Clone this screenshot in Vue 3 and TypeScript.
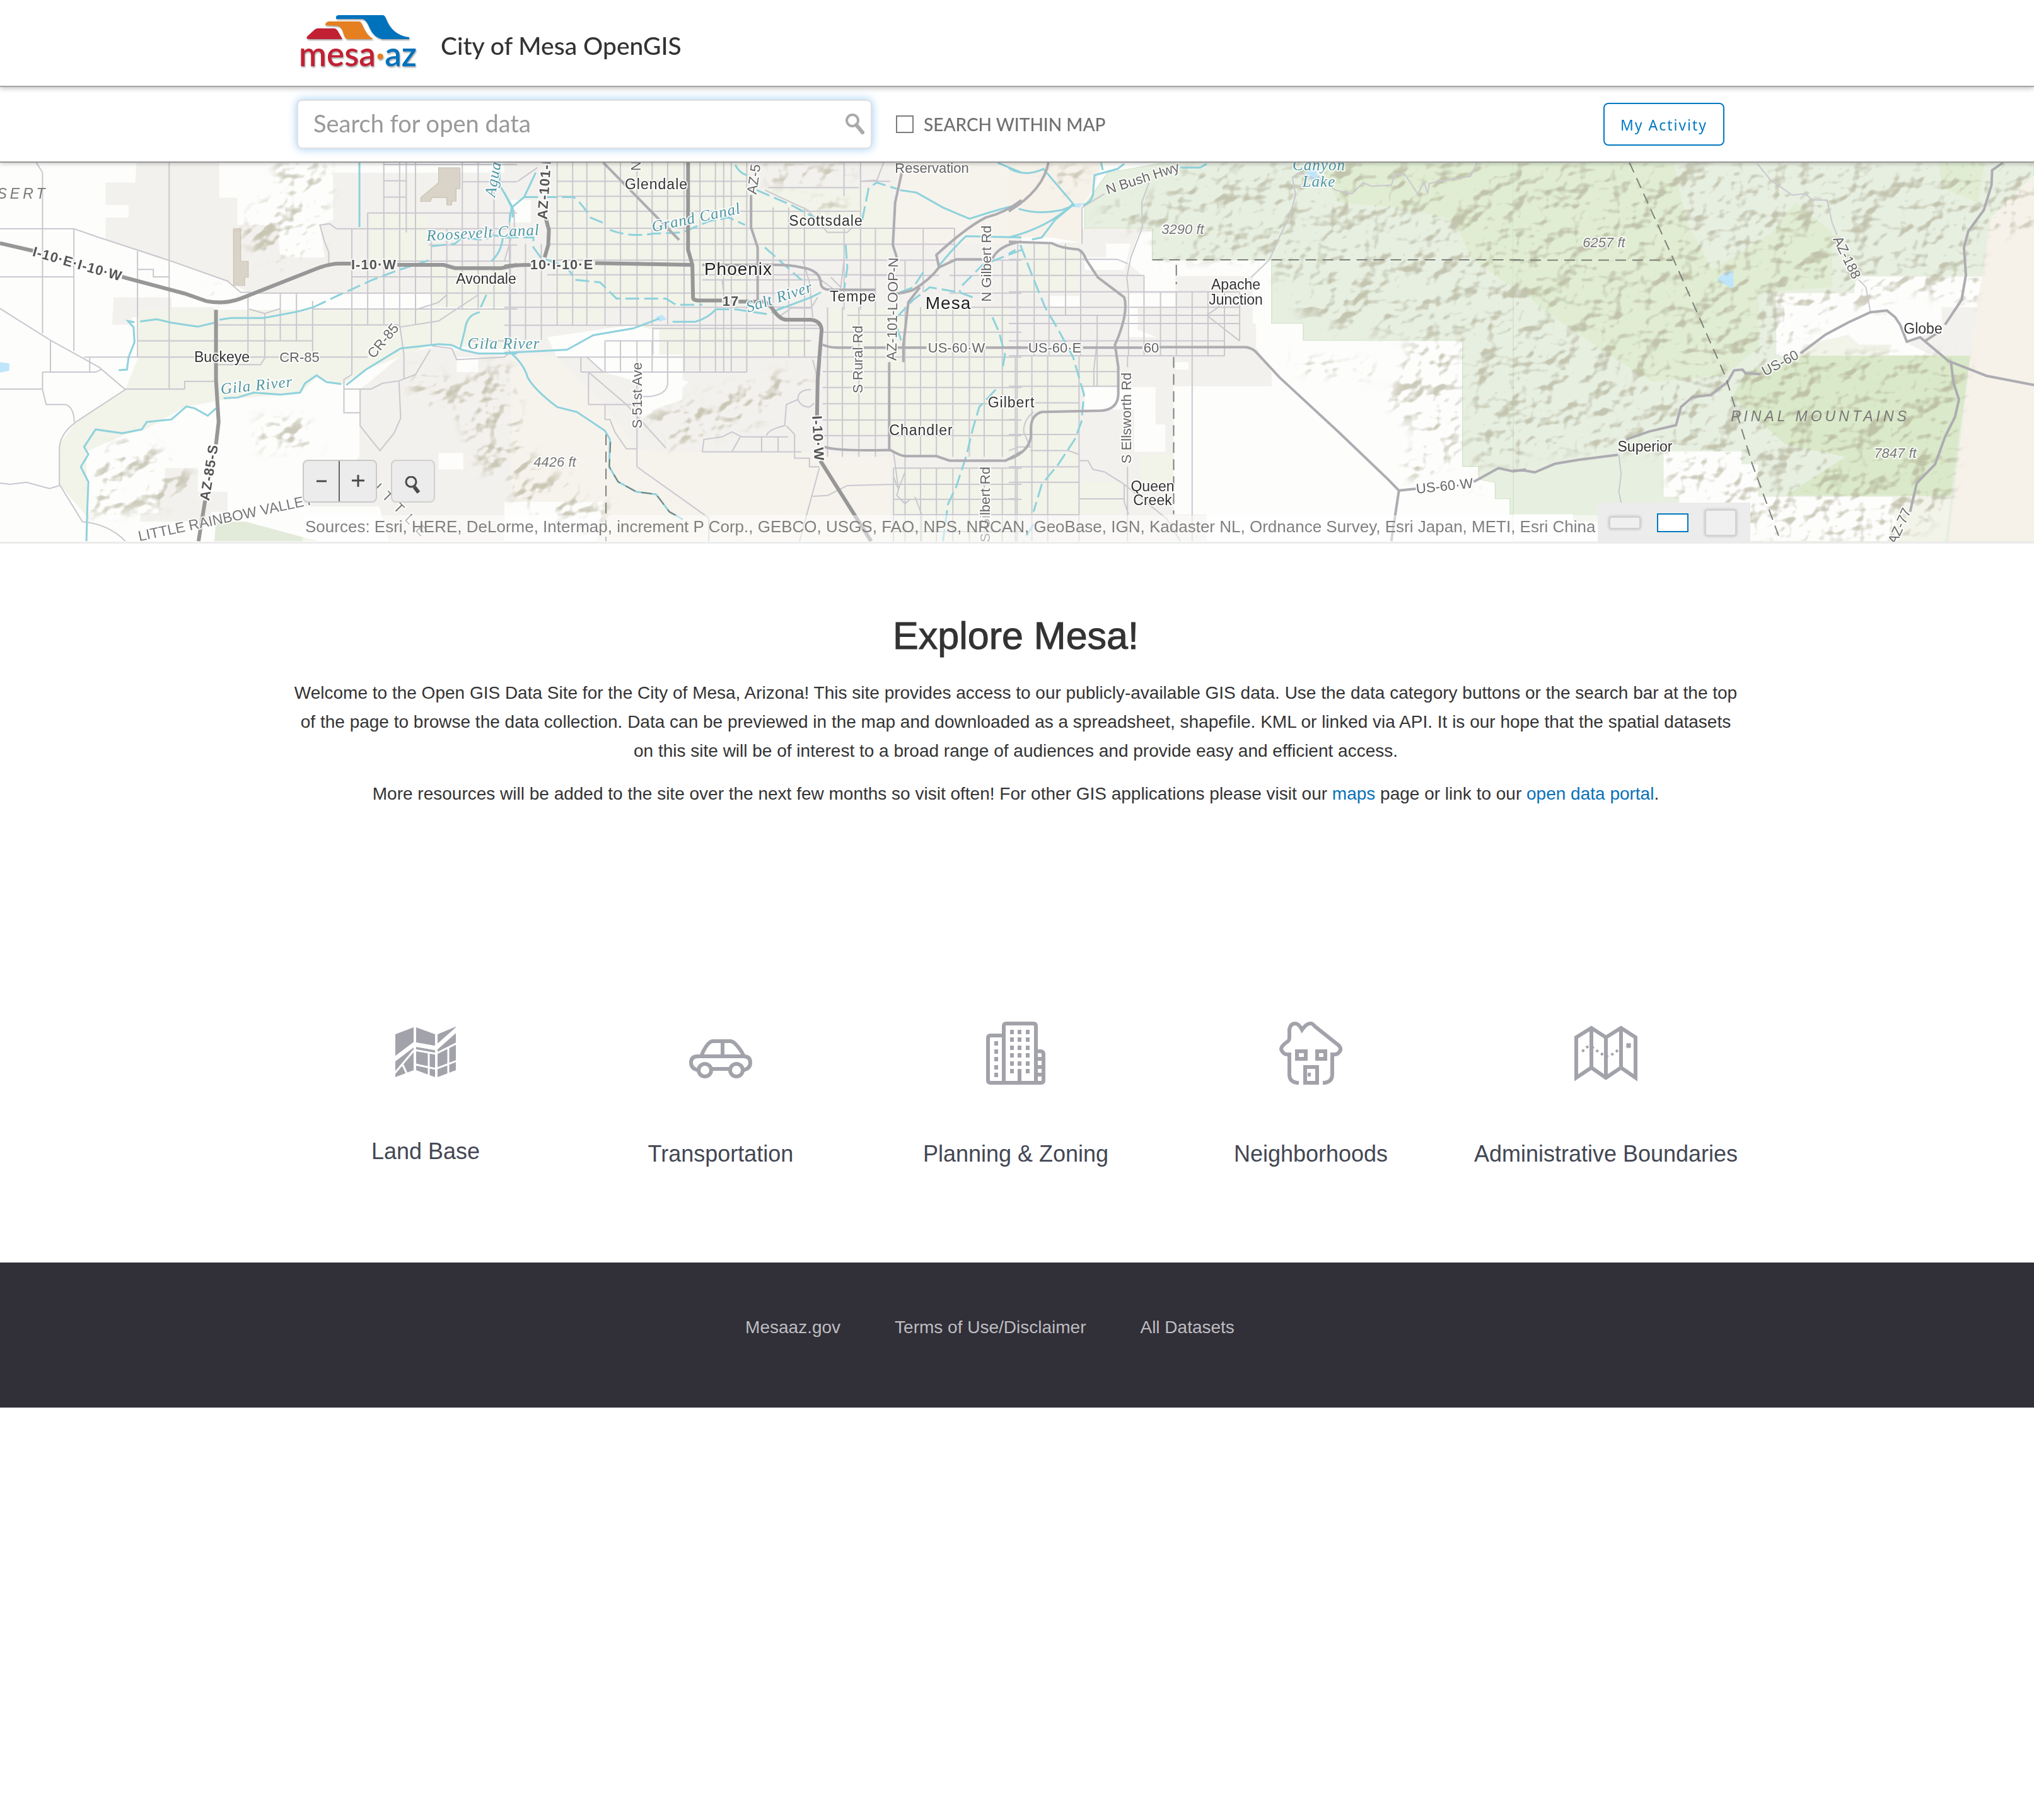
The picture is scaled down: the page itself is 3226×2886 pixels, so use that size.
<script setup lang="ts">
import { ref } from 'vue'

type Line = [at: number, from: number, to: number]

interface Area {
  kind: string
  d: string
}

interface Tile {
  x: number
  scaleX: number
  areas: Area[]
  hills: string
  columns: Line[]
  rows: Line[]
  minor: string
  middle: string
  major: string
  water: string
  canal: string
  border: string
}

interface Label {
  text: string
  x: number
  y: number
  kind: string
  turn?: number
}

const query = ref('')
const withinMap = ref(false)
const mapSize = ref('medium')
const sizes = ['small', 'medium', 'large']

const span = (at: number[], from: number, to: number): Line[] => at.map((n): Line => [n, from, to])

const gridPath = (tile: Tile): string =>
  tile.columns.map(([x, a, b]) => `M${x} ${a}V${b}`).join('') +
  tile.rows.map(([y, a, b]) => `M${a} ${y}H${b}`).join('')

const tiles: Tile[] = [
  {
    x: 0,
    scaleX: 0.523,
    areas: [
      { kind: 'urban', d: 'M415 0H665V160H720V270H840L850 400H985L970 270 1010 250V60H1568V545H760L700 500 520 420 420 375 320 330V240H390V190H320V100H410Z' },
      { kind: 'urban', d: 'M345 560H520V600H650V640H400V670H340Z' },
      { kind: 'farm', d: 'M420 610H1568V770L1310 750 1110 850 1040 910 960 880 910 945 680 970 560 1000 440 1090 380 1110 260 1180 270 1450 180 1310V1150L230 1060 380 930 420 800Z' },
      { kind: 'urban', d: 'M1120 900 1220 790 1310 760 1568 800V1538H1180L1150 1400H920V1380L1090 1200V930Z' },
      { kind: 'urban', d: 'M500 1245H600V1340H690V1420H640V1460H425V1425H480V1330H500Z' },
      { kind: 'bare', d: 'M1330 1185H1405V1250H1330ZM1385 800H1450V860H1385ZM850 550H900V600H850ZM665 60H720V160H665Z' },
      { kind: 'farm', d: 'M1120 225H1300V420H1120ZM1310 430H1568V600H1310Z' },
      { kind: 'park', d: 'M655 1460H745L965 1538H650Z' },
      { kind: 'field', d: 'M708 285H730V415H753V480H742V513H708ZM1330 40H1395V125H1383V175H1370V190H1355V160H1310L1305 176H1276V160L1330 100Z' },
      { kind: 'lake', d: 'M0 820 28 825V855L0 862Z' },
    ],
    hills: 'M820 20H1000V170L960 260 980 340 850 440 780 400 730 300 760 200 850 150 840 60ZM620 530H710V570H640ZM300 1180 420 1110 600 1300 500 1400 270 1450ZM780 1040H920L970 1170H780ZM1250 840 1400 900 1500 820 1568 860V1300L1450 1250 1400 1050 1250 960Z',
    columns: [
      [129, 60, 705], [224, 285, 775], [417, 375, 800], [513, 20, 925], [752, 545, 800], [803, 625, 800],
      ...span([850, 899], 545, 735), [948, 575, 800], [1067, 285, 870], [1115, 220, 670], [1164, 20, 670],
      [1212, 20, 680], [1232, 20, 300], [1260, 20, 670], [1308, 285, 750], [1355, 285, 600], ...span([1402, 1450, 1498], 20, 610),
      [1545, 220, 790], [153, 735, 860], [272, 800, 860],
    ],
    rows: [
      ...span([285, 478], 0, 224), [543, 760, 1568], [607, 950, 1568], [671, 660, 1210], [735, 417, 948], [800, 255, 1115],
      [928, 0, 129], [928, 380, 560], [222, 1115, 1568], [285, 1020, 1568], [478, 1067, 1568], ...span([93, 158], 1164, 1232),
      [28, 1164, 1568], [97, 1402, 1568], [350, 1300, 1568], [415, 1205, 1545], [735, 1420, 1568],
    ],
    minor: 'M110 20 129 60M224 285 300 320 520 415 690 495 730 540H760M0 605 150 730 300 840 380 930 230 1060Q180 1110 180 1170V1310L250 1460Q330 1470 380 1538M129 860H290L310 848M129 860V930L140 990H200Q225 1005 225 1060M0 1305 30 1310 80 1302 150 1327 180 1315M560 928V897H650M417 448H465V478H513M1067 870 1043 890V1023H1092M1043 928H1125L1160 905 1210 895 1260 870 1305 770M1092 928V1075L1152 1175 1195 1105 1215 1045 1210 895M1212 670 1225 790V885M1210 680 1330 655 1450 550M1000 265 970 270 985 340 997 380V430M1000 265 1020 285M755 607 803 625 850 605M660 830H790L805 800M1310 755 1370 765 1385 810 1530 800 1545 780M1260 610 1330 580 1355 550',
    middle: '',
    major: 'M0 343 105 375M370 478 560 545 625 575Q680 590 730 565L960 445Q1000 425 1030 425H1065M1205 430H1345L1380 443H1520L1568 430M655 610V890L663 1060 655 1150M622 1375 602 1538',
    water: 'M360 852 385 850 390 800 408 740 405 680 388 655 408 660M425 657 475 648 520 662 600 678 650 662M665 650 700 643 800 643 900 618 950 600M262 1538 265 1400 268 1300 245 1240 268 1190 255 1160 290 1090 370 1105 430 1090 445 1060 520 1050 565 998 590 1005 630 1035 655 1005M678 965 720 962 770 942 850 950 910 942 925 905 960 873 990 900 1035 908M1050 912 1110 850 1215 765 1330 748 1370 752 1400 770 1450 785 1568 785M1090 20V278M1515 20V110L1555 200V240M1525 320Q1520 380 1490 415M1455 620Q1415 630 1410 690L1395 770M1475 550 1458 600',
    canal: 'M950 600 1030 550 1130 490 1210 450 1300 412M1310 355 1380 345 1400 322 1470 330 1490 312 1568 320',
    border: '',
  },
  {
    x: 800,
    scaleX: 0.523,
    areas: [
      { kind: 'urban', d: 'M0 0H1568V1538H0Z' },
      { kind: 'desert', d: 'M20 790 160 800 300 990 400 1170 480 1180H900L1170 1200V1538H330L20 1370ZM1190 0H1568V345H1190Z' },
      { kind: 'farm', d: 'M150 20H740V600H300V660H150ZM750 120H1170V400H750ZM980 600H1568V1200H1180V1110H980ZM1180 1240H1568V1538H1180ZM300 680H930V795H300Z' },
      { kind: 'bare', d: 'M130 720 390 670 450 690H470V790H540V970L430 1020 410 900 300 860 250 800H160ZM20 170H80V260H20ZM400 950 520 880 560 900 420 1050Z' },
      { kind: 'bare', d: 'M0 1380H300L280 1538H0Z' },
      { kind: 'lake', d: 'M458 640 478 630 492 648 470 658Z' },
    ],
    hills: 'M420 1040 700 920 940 820 930 900 740 1080 640 1110 490 1170 480 1100ZM0 850 30 900 60 1100 100 1250 200 1290 250 1370 330 1400 290 1538 60 1400 20 1370ZM780 20H1060V80L960 100 800 110ZM930 170H1030V225H930Z',
    columns: [
      ...span([160, 207, 250, 305, 352, 402, 448, 495], 20, 670), ...span([545, 593, 640, 665, 688, 735], 20, 860), ...span([815, 862, 910], 200, 800),
      ...span([305, 352, 402, 448, 495], 735, 860), [1080, 20, 610], ...span([1030, 1125], 280, 610), ...span([980, 1025, 1075, 1125, 1215, 1262, 1310, 1360, 1410, 1455, 1510, 1555], 600, 1200),
      ...span([1180, 1215, 1262, 1310, 1360, 1410, 1455, 1510, 1555], 1245, 1538), ...span([1270, 1365], 283, 540), [1215, 411, 545], [1510, 411, 600], [1555, 411, 600],
      ...span([18, 64, 112], 345, 730), [402, 800, 1240], [232, 800, 860], [255, 860, 990], [305, 990, 1050], ...span([780, 830, 880], 1120, 1180), [1030, 20, 155],
    ],
    rows: [
      ...span([95, 155], 160, 740), ...span([215], 160, 1080), ...span([283, 347, 411, 470], 130, 1170), ...span([543, 600], 0, 930), [672, 0, 960], [735, 305, 930], [800, 160, 950], [860, 232, 735], [990, 255, 400],
      ...span([411, 472], 1080, 1318), ...span([411, 472, 543, 600], 1350, 1568), [283, 1170, 1365], [347, 1170, 1365], [632, 1040, 1568],
      ...span([700, 800, 858, 922, 987, 1052, 1115], 965, 1568), ...span([1245, 1310, 1370, 1432, 1500], 1180, 1568), [1180, 600, 900], [120, 800, 1075], [95, 1080, 1170],
    ],
    minor: 'M305 1050H320L335 1100 370 1168H402M402 1240 620 1445V1538M450 680V790M450 685H960M495 860V910Q490 950 440 958H400M255 860 370 990 490 1165M600 1180 605 1130 660 1120 690 1100 720 1120H860M690 1180 715 1120M795 1115Q800 1090 850 1075L855 990 890 970Q890 930 930 930M890 970Q900 1000 925 1000L940 985M855 1075 880 1110V1205H925V1240H955M955 1245 895 1538M935 1358 980 1355 1040 1315 1180 1310M1180 1180 1195 1330 1180 1280M1215 1197 1215 1260 1195 1330 1190 1355 1215 1388 1230 1370M1245 1360 1265 1430V1538M790 130 920 210 980 300 1040 300 1075 250M1080 95 1130 90 1150 20M830 640 870 603H930L950 560M0 415 30 280V210M40 95 100 40M300 860 250 800M905 410 925 500 935 640M660 490 665 540M600 490H960L1000 530M990 480 1020 520 1030 410M950 890 935 810',
    middle: 'M1568 170Q1520 220 1460 240 1400 280 1310 390L1318 440Q1290 490 1240 530 1210 545 1180 545M1318 440 1370 408H1448M1480 405Q1500 350 1568 337M1205 60 1185 180 1178 350 1190 400M1167 820V1170M970 1160Q1010 1178 1170 1172 1200 1195 1215 1197H1310L1350 1215H1520L1568 1180M600 430H820Q870 430 900 440 960 450 960 510 965 530 990 530H1125M748 150V280L768 360V570M300 20 530 330M965 750Q985 762 1010 762H1060M1090 762H1160M1190 762H1280M1460 762H1568M1210 820V750L1225 580 1260 520',
    major: 'M0 437Q30 430 80 430M275 423 570 430M557 20V370L570 430 572 560Q572 573 590 573H660M710 577H790Q805 590 815 610 835 650 855 650H930Q960 655 962 690L950 890 948 1040M958 1215 1112 1538M125 240 135 290 133 350 122 400',
    water: 'M0 783 190 770 270 712 390 685 470 645M510 658H580Q620 640 640 610M20 783Q60 830 70 880 90 930 160 1000L220 1020 305 1095 320 1130 318 1240 345 1300 400 1340 460 1350 500 1420 540 1450M0 140 22 200 60 158 95 60M22 200 15 260M1200 130 1250 140 1330 200 1410 245 1470 220 1510 205 1568 185M1568 320 1400 315Q1370 350 1320 430M700 30Q715 65 735 70M830 610 930 560 960 540M1495 20 1568 60',
    canal: 'M60 158H210Q240 190 260 240L300 262M320 290Q380 320 450 305L540 300 620 255 680 240 730 270M0 320H88V360L110 400 190 440 215 490 290 500 340 565H490L520 590H600M640 608 700 608 800 628 860 590M765 130 870 190 940 240M1085 250 1105 120 1130 100 1190 125M790 360 900 490M1035 350 1040 440 1030 530M1270 460 1240 520 1200 540M1568 370 1450 430 1390 510 1380 540M1480 640 1500 700 1518 790 1510 850M1490 930 1440 1000 1420 1090 1400 1200 1370 1320 1345 1390 1330 1538M1190 640 1240 570 1290 520 1380 540 1420 560M1190 680 1210 760',
    border: 'M308 1110V1538M322 1140 318 1240 345 1300 400 1340 460 1350 500 1420 540 1450',
  },
  {
    x: 1600,
    scaleX: 0.523,
    areas: [
      { kind: 'reserve', d: 'M0 0H290L255 130 220 200V340L130 320H0Z' },
      { kind: 'urban', d: 'M0 340H220V283H400L360 420 410 480V538H505V475H740V665H750V760L797 860V917H500V1430H600V1538H0Z' },
      { kind: 'bare', d: 'M295 345H370L350 450H230V400H295ZM125 555H215V600H125ZM360 545H505V600H390V690L450 720H360ZM230 920H445V1070H475V1180H380V1010H230ZM505 820H545V850H505Z' },
      { kind: 'farm', d: 'M20 350H210V540H20ZM0 800H215V1430H0ZM220 800H325V917H220ZM220 1300H340V1430H220ZM400 1190H500V1300H400Z' },
      { kind: 'forest', d: 'M230 190 300 60 560 0H1568V1430H1520V1368H1475V1303L1425 1290V1238H1376V733H893V665H797V410H435V283H230Z' },
      { kind: 'bright', d: 'M950 0H1568V560L1400 400 1350 250 1180 200 1000 180 960 80Z' },
      { kind: 'lake', d: 'M900 40H930L935 70 955 90 920 95 905 75ZM190 185 225 182 215 200 195 198Z' },
    ],
    hills: 'M300 180 460 140 560 20H1568V1230H1400V740L1000 690 900 640 850 560 810 480V410H440V283H270ZM1210 740H1370V1200L1260 1290 1190 1280 1240 1100 1150 1000ZM830 800 960 810 1120 830 1100 880 900 860ZM1390 1350 1430 1330 1425 1370ZM100 60 240 20 220 120 130 140Z',
    columns: [
      ...span([27, 77, 122, 172], 345, 632), ...span([27, 77, 122], 600, 795), [218, 370, 795], [268, 632, 917], ...span([363, 410], 540, 795), ...span([460, 508, 556, 604, 654], 540, 795), [700, 540, 735],
      ...span([20, 70, 118, 213], 795, 1538), [556, 795, 1538], [360, 795, 840], [360, 1240, 1538], [410, 472, 538], [222, 200, 345],
    ],
    rows: [
      [408, 0, 330], [472, 0, 410], [538, 0, 700], ...span([600, 632, 665], 0, 700), [735, 0, 655], [795, 0, 655], ...span([858, 917], 0, 330), [983, 80, 213], [1050, 0, 20], [1110, 0, 210],
      ...span([1240, 1302], 0, 213), [1368, 0, 20], [1368, 213, 350], [1432, 0, 213],
    ],
    minor: 'M222 200 290 145M425 100 403 180 405 280 370 400 358 480 363 540M880 60 860 80 870 150 850 240 820 320 790 410 735 480M880 60 960 100 990 130 1040 145 1075 100 1100 115 1160 110 1170 70 1200 65 1215 95 1240 145 1260 100 1270 145 1275 105 1300 95 1400 75 1420 20M600 632 700 735M600 632 635 600 650 560M330 408 360 425M213 1215H240L255 1250 290 1260 350 1310 480 1450 520 1538M65 1175H180L213 1190M75 1020Q45 1050 45 1100L65 1160 30 1160 0 1175M350 1310V1380L363 1430M268 735 258 850V917',
    middle: 'M120 20Q105 130 0 215M0 337 130 343Q160 365 210 368 225 375 235 410L270 480 350 560Q357 590 350 640 340 700 322 750L332 840V950Q330 1010 280 1015L100 1020Q70 1030 67 1080V1120Q60 1180 0 1210M0 762H60M225 762H405M455 760H720Q740 765 750 780L820 880 1000 1100 1150 1290 1183 1335 1235 1328M1410 1300 1485 1245 1530 1258 1568 1250M1183 1335 1160 1538',
    major: '',
    water: 'M0 42Q50 80 105 45L195 185Q120 280 0 320M30 205Q90 230 160 210L200 190M70 328 100 320 140 250 190 195M225 190Q250 180 255 150L260 70 330 45 350 25M280 20 285 50M520 40H580L600 25',
    canal: 'M35 350 70 470 110 600 150 690 195 800 228 950 220 1060 200 1130 150 1230 100 1310 75 1420M75 1470 45 1538M0 385 20 370',
    border: 'M435 410H1568M508 430V508M500 800V1430',
  },
  {
    x: 2400,
    scaleX: 0.5268,
    areas: [
      { kind: 'forest', d: 'M0 0H1568V1538H0Z' },
      { kind: 'bright', d: 'M0 0H480L520 250 600 450 780 300 850 180 960 300V520L740 540V760L640 870 420 900 300 800 100 620 0 500ZM1280 20H1420L1400 180 1290 120Z' },
      { kind: 'pinal', d: 'M700 860 870 793H1377L1318 1355H820L1000 1200 820 1150 660 960Z' },
      { kind: 'bare', d: 'M792 543H1027V500L1050 477H1412L1397 600 1377 793H792Z' },
      { kind: 'urban', d: 'M1290 600H1397L1377 793H1260L1180 740 1290 690Z' },
      { kind: 'farm', d: 'M850 793 880 750 1010 710 1040 750H1140L1130 793Z' },
      { kind: 'bare', d: 'M453 1178H687V1230H737V1360H1318L1300 1538H0V1430H180V1460H500V1360H453Z' },
      { kind: 'reserve', d: 'M1568 70 1440 240 1410 480 1377 793 1310 1538H1568Z' },
      { kind: 'farm', d: 'M1140 1360H1318L1300 1538H1160Z' },
      { kind: 'lake', d: 'M615 485 640 457 663 455V525L640 510 618 498Z' },
    ],
    hills: 'M0 20H1568V300H1420L1400 600 1150 520 1120 620 1040 600 900 680 800 780 1370 800 1318 1400 1180 1538H600L500 1400 440 1180H0ZM460 1180H690V1360H640L520 1400Z',
    columns: [],
    rows: [],
    minor: 'M735 25 775 90 840 150 880 145 900 170 945 170 960 260 975 310M1040 490 1062 520 1075 615M318 1190 325 1270 318 1340 325 1385',
    middle: 'M0 1255 30 1254 65 1262 125 1228 195 1212 315 1192M340 1130 410 1098 490 1073 505 1000 540 960 595 952 645 900 665 853 690 850 700 865 745 868M865 785 940 710 1010 660 1075 620 1125 613 1150 640 1165 670 1185 738 1225 720 1310 815 1425 875 1568 912M1240 735 1275 705M1300 670 1350 570 1363 470 1357 360 1370 295 1417 210 1440 110 1442 50 1475 20M1318 820 1325 900 1342 970 1330 1040 1300 1120 1270 1230 1215 1305 1195 1420',
    major: '',
    water: '',
    canal: '',
    border: 'M0 411H480M350 20 480 400 560 640 640 880 720 1230 805 1538',
  },
]

const labels: Label[] = [
  { text: 'SERT', x: 36, y: 307, kind: 'range' },
  { text: 'I-10·E·I-10·W', x: 123, y: 418, kind: 'freeway', turn: 16 },
  { text: 'I-10·W', x: 593, y: 419, kind: 'freeway' },
  { text: '10·I-10·E', x: 891, y: 419, kind: 'freeway' },
  { text: '17', x: 1159, y: 477, kind: 'freeway' },
  { text: 'AZ-85-S', x: 331, y: 749, kind: 'freeway', turn: -81 },
  { text: 'AZ-101-L', x: 863, y: 297, kind: 'freeway', turn: -86 },
  { text: 'I-10·W', x: 1298, y: 695, kind: 'freeway', turn: 87 },
  { text: 'Roosevelt Canal', x: 766, y: 369, kind: 'stream', turn: -3 },
  { text: 'Agua', x: 782, y: 284, kind: 'stream', turn: -80 },
  { text: 'Grand Canal', x: 1104, y: 345, kind: 'stream', turn: -12 },
  { text: 'Salt River', x: 1236, y: 471, kind: 'stream', turn: -18 },
  { text: 'Gila River', x: 407, y: 611, kind: 'stream', turn: -6 },
  { text: 'Gila River', x: 799, y: 545, kind: 'stream' },
  { text: 'Canyon', x: 2092, y: 262, kind: 'stream' },
  { text: 'Lake', x: 2092, y: 288, kind: 'stream' },
  { text: 'Avondale', x: 771, y: 442, kind: 'town' },
  { text: 'Buckeye', x: 352, y: 566, kind: 'town' },
  { text: 'CR-85', x: 475, y: 566, kind: 'road' },
  { text: 'CR-85', x: 607, y: 540, kind: 'road', turn: -50 },
  { text: 'Glendale', x: 1041, y: 292, kind: 'suburb' },
  { text: 'Phoenix', x: 1171, y: 428, kind: 'city' },
  { text: 'Scottsdale', x: 1310, y: 350, kind: 'suburb' },
  { text: 'Tempe', x: 1353, y: 470, kind: 'suburb' },
  { text: 'Mesa', x: 1504, y: 482, kind: 'city' },
  { text: 'Gilbert', x: 1604, y: 638, kind: 'suburb' },
  { text: 'Chandler', x: 1461, y: 682, kind: 'suburb' },
  { text: 'Reservation', x: 1478, y: 266, kind: 'small' },
  { text: 'Apache', x: 1960, y: 451, kind: 'town' },
  { text: 'Junction', x: 1960, y: 475, kind: 'town' },
  { text: 'Queen', x: 1828, y: 771, kind: 'town' },
  { text: 'Creek', x: 1828, y: 793, kind: 'town' },
  { text: 'Superior', x: 2609, y: 708, kind: 'town' },
  { text: 'Globe', x: 3050, y: 521, kind: 'town' },
  { text: 'N', x: 1008, y: 263, kind: 'road', turn: -90 },
  { text: 'AZ-5', x: 1195, y: 284, kind: 'road', turn: -82 },
  { text: 'N Gilbert Rd', x: 1564, y: 418, kind: 'road', turn: -90 },
  { text: 'S Gilbert Rd', x: 1562, y: 800, kind: 'road', turn: -90 },
  { text: 'AZ-101-LOOP-N', x: 1415, y: 490, kind: 'road', turn: -89 },
  { text: 'S Rural Rd', x: 1360, y: 570, kind: 'road', turn: -90 },
  { text: 'S 51st Ave', x: 1010, y: 627, kind: 'road', turn: -90 },
  { text: 'S Ellsworth Rd', x: 1786, y: 663, kind: 'road', turn: -90 },
  { text: 'US-60·W', x: 1517, y: 551, kind: 'road' },
  { text: 'US-60·E', x: 1673, y: 551, kind: 'road' },
  { text: '60', x: 1826, y: 551, kind: 'road' },
  { text: 'N Bush Hwy', x: 1812, y: 282, kind: 'road', turn: -18 },
  { text: 'US-60·W', x: 2291, y: 770, kind: 'road', turn: -6 },
  { text: 'US-60', x: 2823, y: 575, kind: 'road', turn: -28 },
  { text: 'AZ-188', x: 2930, y: 408, kind: 'road', turn: 64 },
  { text: 'AZ-77', x: 3012, y: 834, kind: 'road', turn: -66 },
  { text: '4426 ft', x: 880, y: 732, kind: 'peak' },
  { text: '3290 ft', x: 1876, y: 363, kind: 'peak' },
  { text: '6257 ft', x: 2544, y: 384, kind: 'peak' },
  { text: '7847 ft', x: 3006, y: 718, kind: 'peak' },
  { text: 'PINAL MOUNTAINS', x: 2887, y: 660, kind: 'range' },
  { text: 'LITTLE RAINBOW VALLEY', x: 358, y: 821, kind: 'valley', turn: -12 },
  { text: 'ITTLE', x: 640, y: 812, kind: 'wide', turn: 45 },
]

const windowRows = [16, 28, 41, 53, 66, 78]
const sideRows = [34, 47, 59, 72, 84]
const rightRows = [59, 72, 84]

const categories = [
  { id: 'land', name: 'Land Base' },
  { id: 'transport', name: 'Transportation' },
  { id: 'planning', name: 'Planning & Zoning' },
  { id: 'homes', name: 'Neighborhoods' },
  { id: 'admin', name: 'Administrative Boundaries' },
]

const footerLinks = ['Mesaaz.gov', 'Terms of Use/Disclaimer', 'All Datasets']
</script>

<template>
  <div class="page">
    <header class="masthead">
      <div class="container brand">
        <a href="#" class="logo" aria-label="mesa az">
          <svg viewBox="472 18 192 96" width="192" height="96">
            <g class="logo-shade">
              <path fill="#c22033" d="M486 59Q484 57 488 54L498 45Q500 43 503 43H529Q532 43 534 46L542 60H488Z" />
              <path fill="#e57f1f" d="M515 38Q515 33 520 32H568Q571 32 573 36Q580 54 591 60H551Q547 60 545 55Q541 40 535 39Z" />
              <path fill="#0072bc" d="M532 28Q531 22 536 22H606Q609 22 611 27Q621 54 648 57V60H605Q592 57 586 44Q580 29 574 28Z" />
              <text x="473" y="103"><tspan fill="#c22033">mesa</tspan><tspan fill="#e57f1f">·</tspan><tspan fill="#0072bc">az</tspan></text>
            </g>
          </svg>
        </a>
        <span class="site-name">City of Mesa OpenGIS</span>
      </div>
    </header>

    <nav class="toolbar">
      <div class="container tools">
        <form class="search" role="search" @submit.prevent>
          <input v-model="query" type="text" placeholder="Search for open data" aria-label="Search for open data" />
          <svg class="lens" viewBox="0 0 30 34" width="30" height="34">
            <circle cx="11" cy="11" r="9" /><path d="M17 18 27 30" />
          </svg>
        </form>
        <label class="within">
          <input v-model="withinMap" type="checkbox" />
          <span>SEARCH WITHIN MAP</span>
        </label>
        <button type="button" class="activity">My Activity</button>
      </div>
    </nav>

    <section class="map" aria-label="Map">
      <svg class="canvas" viewBox="0 258 3226 601" preserveAspectRatio="xMidYMid slice">
        <defs>
          <filter id="relief" filterUnits="userSpaceOnUse" x="0" y="258" width="3226" height="601" color-interpolation-filters="sRGB">
            <feGaussianBlur in="SourceAlpha" stdDeviation="9" result="soft" />
            <feTurbulence type="fractalNoise" baseFrequency="0.022 0.026" numOctaves="3" seed="11" result="noise" />
            <feDiffuseLighting in="noise" surfaceScale="24" diffuseConstant="1" lighting-color="#fff" result="lit">
              <feDistantLight azimuth="225" elevation="48" />
            </feDiffuseLighting>
            <feColorMatrix in="lit" type="matrix" values="0 0 0 0 .68  0 0 0 0 .67  0 0 0 0 .57  -1.1 0 0 0 .62" result="shade" />
            <feComposite in="shade" in2="soft" operator="in" />
          </filter>
        </defs>
        <rect x="0" y="258" width="3226" height="601" fill="#fdfdfc" />
        <g v-for="tile in tiles" :key="`area-${tile.x}`" :transform="`translate(${tile.x} 250) scale(${tile.scaleX} .3954)`">
          <path v-for="(area, i) in tile.areas" :key="i" :class="['area', area.kind]" :d="area.d" />
        </g>
        <g filter="url(#relief)">
          <g v-for="tile in tiles" :key="`hill-${tile.x}`" :transform="`translate(${tile.x} 250) scale(${tile.scaleX} .3954)`">
            <path :d="tile.hills" />
          </g>
        </g>
        <g v-for="tile in tiles" :key="`line-${tile.x}`" class="lines" :transform="`translate(${tile.x} 250) scale(${tile.scaleX} .3954)`">
          <path class="minor" :d="gridPath(tile) + tile.minor" />
          <path class="water" :d="tile.water" />
          <path class="water canal" :d="tile.canal" />
          <path class="middle" :d="tile.middle" />
          <path class="border" :d="tile.border" />
          <path class="major" :d="tile.major" />
        </g>
        <text
          v-for="(label, i) in labels"
          :key="i"
          :class="['label', label.kind]"
          :transform="`translate(${label.x} ${label.y}) rotate(${label.turn ?? 0})`"
          dy="8"
        >{{ label.text }}</text>
      </svg>

      <div class="overlay">
        <div class="map-buttons">
          <div class="zoom">
            <button type="button" aria-label="Zoom out">
              <svg viewBox="0 0 20 20" width="20" height="20"><path d="M2 10H18" /></svg>
            </button>
            <button type="button" aria-label="Zoom in">
              <svg viewBox="0 0 20 20" width="20" height="20"><path d="M0 9H20M10 0V19" /></svg>
            </button>
          </div>
          <button type="button" class="locate" aria-label="Find a place">
            <svg viewBox="0 0 26 28" width="26" height="28"><circle cx="10" cy="9" r="8" /><path class="grip" d="M15 17 22 26" /></svg>
          </button>
        </div>
        <div class="map-foot">
          <p class="sources">Sources: Esri, HERE, DeLorme, Intermap, increment P Corp., GEBCO, USGS, FAO, NPS, NRCAN, GeoBase, IGN, Kadaster NL, Ordnance Survey, Esri Japan, METI, Esri China (Hong Kong)</p>
          <div class="sizes">
            <button
              v-for="size in sizes"
              :key="size"
              type="button"
              :class="['size', size, { active: mapSize === size }]"
              :aria-label="`${size} map`"
              @click="mapSize = size"
            ></button>
          </div>
        </div>
      </div>
    </section>

    <main class="content">
      <div class="container">
        <section class="intro">
          <h1>Explore Mesa!</h1>
          <p>Welcome to the Open GIS Data Site for the City of Mesa, Arizona! This site provides access to our publicly-available GIS data. Use the data category buttons or the search bar at the top of the page to browse the data collection. Data can be previewed in the map and downloaded as a spreadsheet, shapefile. KML or linked via API. It is our hope that the spatial datasets on this site will be of interest to a broad range of audiences and provide easy and efficient access.</p>
          <p>More resources will be added to the site over the next few months so visit often! For other GIS applications please visit our <a href="#">maps</a> page or link to our <a href="#">open data portal</a>.</p>
        </section>

        <section class="categories">
          <a v-for="category in categories" :key="category.id" href="#" class="category">
            <svg v-if="category.id === 'land'" viewBox="0 0 96 96" width="96" height="96">
              <path fill="#a2a3aa" d="M0 20 29 9V77L0 88ZM33 9 63 20V88L33 77ZM67 20 96 8V77L67 88Z" />
              <g fill="none" stroke="#fff">
                <path stroke-width="7" d="M-3 61 30 36 64 42 99 11" />
                <path stroke-width="3" d="M-2 83 30 45 64 51 98 34M11 67 19 84M32 68 64 75 98 62M53 49V88M84 40V86" />
              </g>
            </svg>
            <svg v-else-if="category.id === 'transport'" class="outline" viewBox="0 0 100 100" width="100" height="100">
              <path d="M15 77Q3 75 3 65 3 55 14 55H86Q97 55 97 65 97 75 85 77M35 75H65M19 55Q26 37 34 32 36 31 39 31H65Q69 31 73 35 82 44 87 55M53 31V55" />
              <circle cx="25" cy="77" r="10" /><circle cx="75" cy="77" r="10" />
            </svg>
            <svg v-else-if="category.id === 'planning'" class="outline" viewBox="0 0 94 100" width="94" height="100">
              <path d="M28 22H7Q3 22 3 26V93Q3 97 7 97H87Q91 97 91 93V52Q91 47 86 47H79M28 97V7Q28 3 32 3H75Q79 3 79 7V97M53 76V97" />
              <g class="panes">
                <rect v-for="y in sideRows" :key="`s${y}`" x="13" :y="y - 3" width="6" height="7" />
                <template v-for="y in windowRows" :key="`w${y}`">
                  <rect x="38" :y="y - 3" width="6" height="7" />
                  <rect x="50" :y="y - 3" width="6" height="7" />
                  <rect x="63" :y="y - 3" width="6" height="7" />
                </template>
                <rect v-for="y in rightRows" :key="`r${y}`" x="82" :y="y - 3" width="7" height="6" />
              </g>
            </svg>
            <svg v-else-if="category.id === 'homes'" class="outline" viewBox="0 0 100 100" width="100" height="100">
              <path d="M31 97H28Q16 95 16 84V52H13Q6 52 3 44 3 38 14 31 16 29 16 26V12Q18 3 25 3 31 3 36 13 43 3 49 3 52 2 56 7L91 35Q98 40 97 45 94 52 88 52H84V84Q84 95 72 97H69" />
              <path d="M28 47H42V59H28ZM60 47H73V59H60ZM41 97V72H60V97ZM45 84H50" />
            </svg>
            <svg v-else class="outline" viewBox="0 0 100 100" width="100" height="100">
              <path d="M3 89V25L27 10 50 25 74 10 97 25V89L74 73 50 89 27 73ZM27 10V73M50 25V89M74 10V73" />
              <path class="trail" d="M13 48Q17 38 28 40 40 50 50 55 62 53 70 44 74 38 80 38" />
              <path class="cross" d="M83 35 89 41M89 35 83 41" />
            </svg>
            <span>{{ category.name }}</span>
          </a>
        </section>
      </div>
    </main>

    <footer class="footer">
      <ul>
        <li v-for="link in footerLinks" :key="link"><a href="#">{{ link }}</a></li>
      </ul>
    </footer>
  </div>
</template>

<style>
body {
  margin: 0;
  background: #fff;
}
</style>

<style scoped>
.page {
  font-family: "Liberation Sans", Arial, sans-serif;
  color: #333;
}

.page *,
.page *::before {
  box-sizing: border-box;
}

a {
  color: #0971b8;
  text-decoration: none;
}

button {
  padding: 0;
  font: inherit;
  cursor: pointer;
}

.masthead,
.toolbar,
.content {
  padding-right: 4px;
}

.container {
  max-width: 2340px;
  margin: 0 auto;
}

.masthead {
  position: relative;
  z-index: 2;
  border-bottom: 2px solid #a3a5a3;
  box-shadow: 0 2px 8px rgba(0, 0, 0, 0.25);
  background: #fff;
}

.brand {
  display: flex;
  align-items: center;
  gap: 34px;
  height: 136px;
  padding: 0 32px;
}

.logo svg {
  display: block;
}

.logo-shade {
  filter: drop-shadow(1px 2px 1px rgba(0, 0, 0, 0.35));
}

.logo-shade text {
  font-family: Lato, sans-serif;
  font-size: 53px;
  font-weight: 600;
}

.site-name {
  padding-top: 8px;
  font-family: Lato, sans-serif;
  font-size: 39px;
  font-weight: 500;
  line-height: 48px;
}

.toolbar {
  position: relative;
  z-index: 1;
  border-bottom: 2px solid #989898;
  box-shadow: 0 2px 6px rgba(0, 0, 0, 0.2);
  background: #fff;
}

.tools {
  display: flex;
  align-items: center;
  height: 118px;
  padding: 0 46px 0 30px;
}

.search {
  position: relative;
  width: 912px;
}

.search input {
  display: block;
  width: 100%;
  height: 78px;
  padding: 0 70px 4px 24px;
  border: 2px solid #e2dfe0;
  border-radius: 8px;
  outline: none;
  box-shadow: 0 0 14px rgba(120, 185, 240, 0.75);
  font-family: Lato, sans-serif;
  font-size: 38px;
  color: #333;
}

.search input::placeholder {
  color: #999;
  opacity: 1;
}

.lens {
  position: absolute;
  top: 22px;
  right: 12px;
  fill: none;
  stroke: #aaa;
  stroke-width: 4;
}

.lens path {
  stroke-width: 6;
  stroke-linecap: round;
}

.within {
  display: flex;
  align-items: center;
  gap: 16px;
  margin-left: 38px;
  font-family: Lato, sans-serif;
  font-size: 28px;
  line-height: 36px;
  font-weight: 500;
  color: #707070;
}

.within input {
  appearance: none;
  width: 28px;
  height: 28px;
  margin: 0;
  border: 2px solid #7c7c7c;
}

.activity {
  width: 192px;
  height: 68px;
  padding-top: 2px;
  margin-left: auto;
  border: 2px solid #0079c1;
  border-radius: 8px;
  background: #fff;
  font-family: "Noto Sans", sans-serif;
  font-size: 23px;
  letter-spacing: 2px;
  color: #0079c1;
}

.map {
  position: relative;
  height: 604px;
  border-bottom: 3px solid #ececec;
}

.canvas {
  display: block;
  width: 100%;
  height: 100%;
}

.area.urban {
  fill: #f3f1ed;
}

.area.desert {
  fill: #f6f3ed;
}

.area.farm {
  fill: #f2f3e9;
}

.area.bare {
  fill: #fdfdfc;
}

.area.park {
  fill: #e2ebd9;
}

.area.field {
  fill: #d9d3c8;
  stroke: #c5beb0;
  stroke-width: 2;
}

.area.lake {
  fill: #bfe5fa;
}

.area.reserve {
  fill: #f6f2ea;
}

.area.forest {
  fill: #e7efe1;
  stroke: #c9dfbc;
  stroke-width: 2;
}

.area.bright {
  fill: #e0edd2;
}

.area.pinal {
  fill: #dae9c9;
}

.lines path {
  fill: none;
  vector-effect: non-scaling-stroke;
}

.lines .minor {
  stroke: #c9c8cf;
  stroke-width: 2;
}

.lines .water {
  stroke: #8ed2dc;
  stroke-width: 3;
}

.lines .canal {
  stroke-dasharray: 22 8;
}

.lines .middle {
  stroke: #adacb1;
  stroke-width: 4;
}

.lines .major {
  stroke: #979797;
  stroke-width: 6;
}

.lines .border {
  stroke: #7d807a;
  stroke-width: 2;
  stroke-dasharray: 17 10;
}

.label {
  font-size: 22px;
  text-anchor: middle;
  fill: #666;
  stroke: rgba(255, 255, 255, 0.8);
  stroke-width: 4;
  stroke-linejoin: round;
  paint-order: stroke;
}

.label.town,
.label.suburb {
  font-size: 23px;
  fill: #333;
}

.label.suburb {
  letter-spacing: 1px;
}

.label.city {
  font-size: 28px;
  letter-spacing: 1px;
  fill: #222;
}

.label.freeway {
  font-weight: 700;
  letter-spacing: 1px;
  fill: #555;
}

.label.stream {
  font-family: "Liberation Serif", serif;
  font-size: 25px;
  font-style: italic;
  letter-spacing: 1px;
  fill: #4f97a3;
}

.label.peak {
  font-style: italic;
  fill: #777;
}

.label.range {
  font-size: 23px;
  font-style: italic;
  letter-spacing: 5px;
  fill: #777;
  stroke: none;
}

.label.valley {
  font-size: 23px;
  fill: #777;
}

.label.wide {
  letter-spacing: 12px;
  fill: #777;
}

.overlay {
  position: absolute;
  inset: auto 0 0;
  display: flex;
  flex-direction: column;
  width: 100%;
  max-width: 2294px;
  margin: 0 auto;
}

.map-buttons {
  display: flex;
  gap: 22px;
  height: 68px;
  margin-left: 14px;
}

.zoom {
  display: flex;
  overflow: hidden;
  border: 2px solid #cacaca;
  border-radius: 8px;
  background: #ececec;
}

.zoom button {
  display: grid;
  place-items: center;
  width: 55px;
  border: 0;
  background: none;
}

.zoom button + button {
  width: 59px;
  border-left: 2px solid #666;
}

.map-buttons svg {
  fill: none;
  stroke: #4a4a4a;
  stroke-width: 3;
}

.locate {
  display: grid;
  place-items: center;
  width: 70px;
  padding-top: 12px;
  border: 2px solid #d0d0d0;
  border-radius: 8px;
  background: #ececec;
}

.locate .grip {
  stroke-width: 6;
}

.map-foot {
  display: flex;
  align-items: flex-end;
  margin: 0 -16px 0 14px;
}

.sources {
  flex: 1;
  min-width: 0;
  margin: 0;
  padding: 0 0 6px 4px;
  overflow: hidden;
  background: rgba(255, 255, 255, 0.5);
  font-size: 26px;
  line-height: 36px;
  white-space: nowrap;
  color: #808080;
}

.sizes {
  display: flex;
  align-items: center;
  gap: 26px;
  height: 62px;
  padding: 2px 22px 0 18px;
  background: #ececec;
}

.size {
  width: 50px;
  border: 2px solid #d2d2d2;
  border-radius: 4px;
  background: #f0f0f0;
  box-shadow: 0 0 4px rgba(0, 0, 0, 0.25);
}

.size.small {
  height: 20px;
}

.size.medium {
  height: 30px;
}

.size.large {
  height: 42px;
}

.size.active {
  border: 2px solid #0079c1;
  border-radius: 0;
  background: #fff;
  box-shadow: none;
}

.intro {
  padding: 106px 20px 0;
  text-align: center;
}

h1 {
  margin: 0 0 28px;
  font-size: 61px;
  line-height: 80px;
  font-weight: 400;
  -webkit-text-stroke: 1px #333;
}

.intro p {
  margin: 0 0 22px;
  font-size: 28px;
  line-height: 46px;
}

.categories {
  display: grid;
  grid-template-columns: repeat(5, 1fr);
  align-items: start;
  padding: 316px 0 150px;
}

.category {
  display: flex;
  flex-direction: column;
  align-items: center;
  gap: 88px;
  font-size: 36px;
  line-height: 44px;
  color: #434753;
  white-space: nowrap;
}

.outline {
  fill: none;
  stroke: #a2a3aa;
  stroke-width: 6;
}

.panes {
  fill: #a2a3aa;
  stroke: none;
}

.outline .trail {
  stroke-width: 4;
  stroke-dasharray: 4 5;
}

.outline .cross {
  stroke-width: 4;
}

.footer {
  background: #312f38;
}

.footer ul {
  display: flex;
  justify-content: center;
  height: 230px;
  margin: 0;
  padding: 80px 0 0;
  list-style: none;
}

.footer li {
  margin-right: 86px;
  font-size: 28px;
  line-height: 46px;
}

.footer a {
  color: #bdbdc0;
}
</style>
